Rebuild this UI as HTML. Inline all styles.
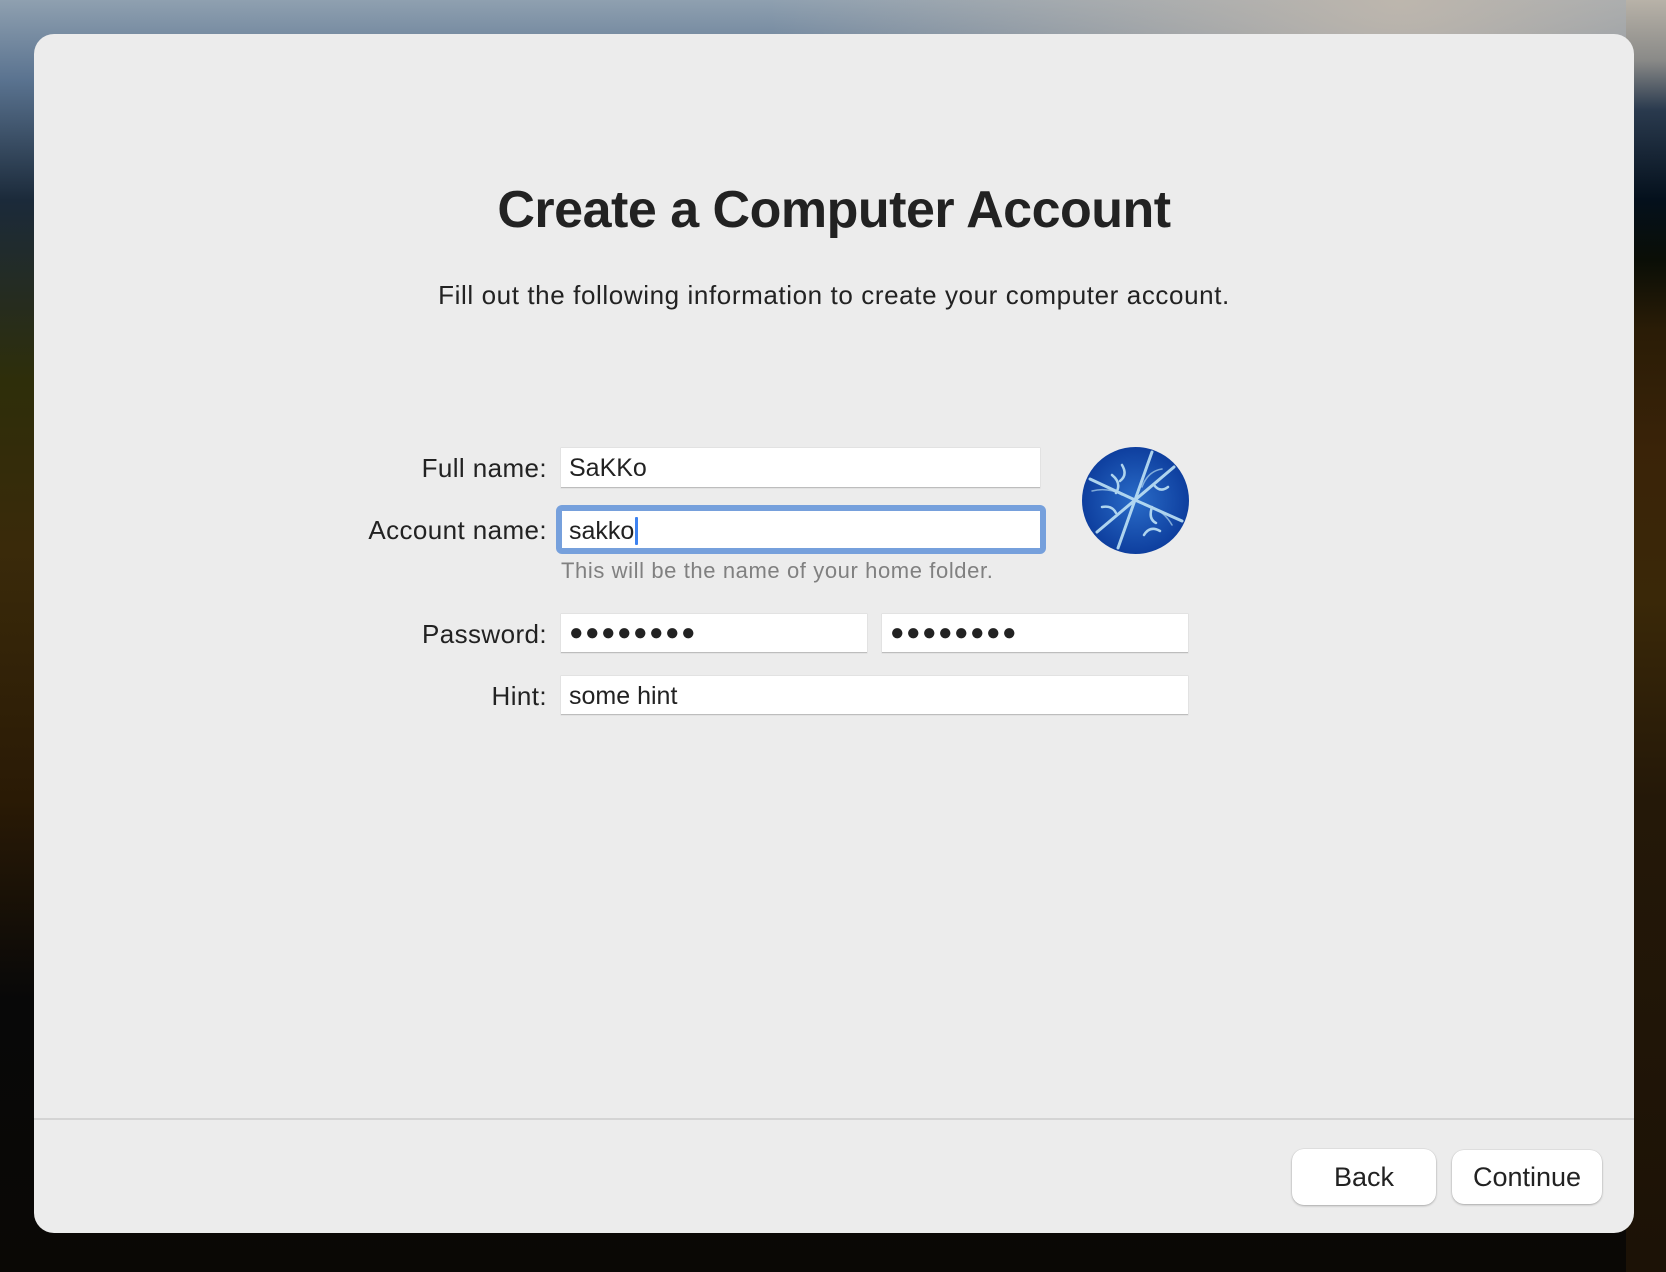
<!DOCTYPE html>
<html><head><meta charset="utf-8">
<style>
*{box-sizing:border-box;margin:0;padding:0}
html,body{width:1666px;height:1272px;overflow:hidden}
body{position:relative;font-family:"Liberation Sans",sans-serif;color:#262626;
background:
radial-gradient(ellipse 900px 500px at 1400px 0px,#bdb6ad 0%,rgba(150,150,150,0) 70%),
linear-gradient(180deg,#8fa0b0 0px,#5a7390 80px,#1b2a3a 200px,#2e2e0a 380px,#3a2a0a 550px,#2a1a05 800px,#080808 1000px,#0a0805 1272px);}
.rbg{position:absolute;right:0;top:0;width:40px;height:1272px;background:linear-gradient(180deg,#b8b2a8 0,#8a8a88 60px,#2a3a4e 110px,#04101c 200px,#0a0e06 260px,#2a1c06 330px,#3a2308 450px,#3a2808 600px,#241808 800px,#1c1206 1272px)}
.win{position:absolute;left:34px;top:34px;width:1600px;height:1199px;background:#ececec;border-radius:20px;overflow:hidden}
.abs{position:absolute}
h1{position:absolute;left:0;width:1600px;top:146px;text-align:center;font-size:52px;font-weight:bold;color:#222;letter-spacing:-0.5px}
.sub{position:absolute;left:0;width:1600px;top:246px;text-align:center;font-size:26px;letter-spacing:.6px;color:#222}
.lbl{position:absolute;right:1087px;font-size:26px;letter-spacing:.4px;color:#222;text-align:right;white-space:nowrap}
.fld{position:absolute;background:#fff;border-bottom:1.5px solid #bdbdbd;box-shadow:0 0 0 0.5px #d8d8d8;font-size:25px;padding-left:8px;line-height:41px;color:#222}
.dots{font-size:24px;letter-spacing:1.5px;padding-left:8px;line-height:38px}
.btn{position:absolute;background:#fff;border-radius:12px;box-shadow:0 1px 2px rgba(0,0,0,.25),0 0 0 .5px rgba(0,0,0,.08);font-size:27px;text-align:center;line-height:56px;color:#222}
</style></head><body>
<div class="rbg"></div>
<div class="win">
<h1>Create a Computer Account</h1>
<div class="sub">Fill out the following information to create your computer account.</div>

<div class="lbl" style="top:419px">Full name:</div>
<div class="fld" style="left:527px;top:414px;width:479px;height:40px">SaKKo</div>

<div class="lbl" style="top:481px">Account name:</div>
<div class="abs" style="left:522px;top:471px;width:490px;height:49px;border-radius:6px;background:#76a0dc"></div>
<div class="abs" style="left:528px;top:477px;width:478px;height:37px;background:#fff;font-size:25px;line-height:40px;padding-left:7px;color:#222">sakko<span style="display:inline-block;width:3px;height:28px;background:#3d82f0;vertical-align:-6px;margin-left:1px;border-radius:1px"></span></div>
<div class="abs" style="left:527px;top:524px;font-size:22px;color:#808080;letter-spacing:.6px">This will be the name of your home folder.</div>

<div class="lbl" style="top:585px">Password:</div>
<div class="fld dots" style="left:527px;top:580px;width:306px;height:39px">●●●●●●●●</div>
<div class="fld dots" style="left:848px;top:580px;width:306px;height:39px">●●●●●●●●</div>

<div class="lbl" style="top:647px">Hint:</div>
<div class="fld" style="left:527px;top:642px;width:627px;height:39px">some hint</div>

<svg class="abs" style="left:1048px;top:413px" width="107" height="107" viewBox="0 0 107 107">
<defs><radialGradient id="g" cx="50%" cy="50%" r="55%"><stop offset="0" stop-color="#2a6cc8"/><stop offset="1" stop-color="#0b3a9a"/></radialGradient>
<clipPath id="c"><circle cx="53.5" cy="53.5" r="53.5"/></clipPath></defs>
<circle cx="53.5" cy="53.5" r="53.5" fill="url(#g)"/>
<g clip-path="url(#c)" stroke="#bfe3f5" stroke-width="3" fill="none" stroke-linecap="round" opacity=".9">
<path d="M53 53 L70 5 M53 53 L36 101 M53 53 L8 32 M53 53 L100 74 M53 53 L15 85 M53 53 L92 20"/>
<path d="M30 28 q10 8 4 18 M74 76 q-8 -4 -4 -16 M20 60 q10 -2 14 6 M86 40 q-8 6 -14 -2 M62 88 q6 -10 16 -4 M40 18 q6 10 -2 16" stroke-width="2.5"/>
<path d="M68 60 q14 4 22 18 M40 48 q-14 -8 -30 -4 M60 40 q6 -16 20 -18" stroke-width="1.5" opacity=".7"/>
</g></svg>

<div class="abs" style="left:0;top:1084px;width:1600px;height:2px;background:#d4d4d4"></div>
<div class="btn" style="left:1258px;top:1115px;width:144px;height:56px">Back</div>
<div class="btn" style="left:1418px;top:1116px;width:150px;height:54px;line-height:54px">Continue</div>
</div>
</body></html>
